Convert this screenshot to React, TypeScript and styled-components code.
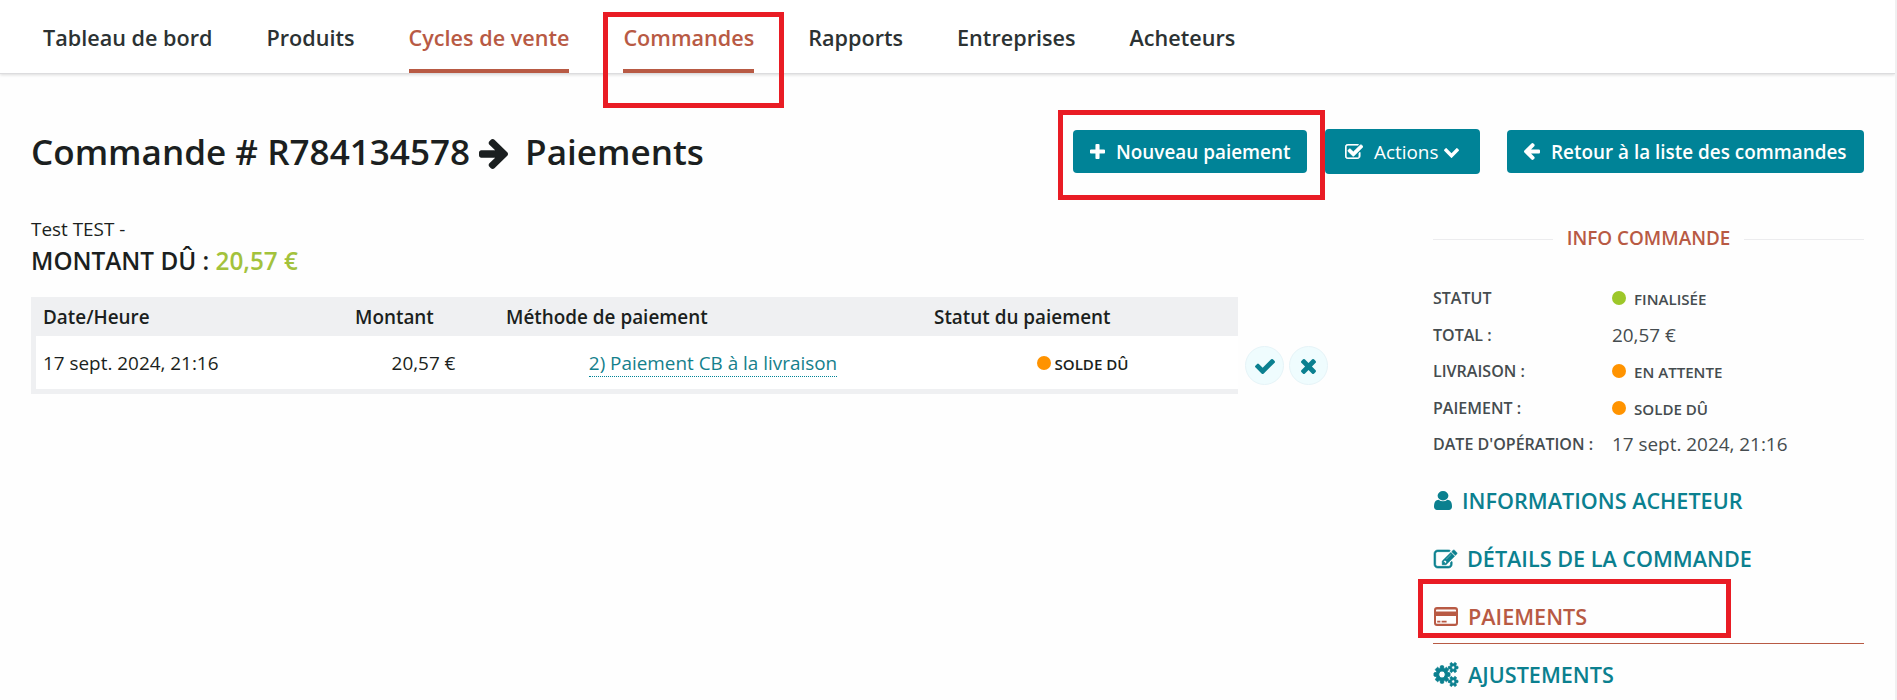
import React from "react";
import styled, { createGlobalStyle } from "styled-components";

const teal = "#008397";
const rust = "#b85a44";
const green = "#9dc729";
const orange = "#ff9300";

const GlobalStyle = createGlobalStyle`
  * { box-sizing: border-box; }
  body {
    margin: 0;
    background: #fefefe;
    color: #1b1f20;
    font-family: "Open Sans", "Noto Sans", sans-serif;
    font-size: 18.9px;
  }
`;

const Page = styled.div`
  position: relative;
  height: 700px;
  overflow: hidden;
  border-right: 2px solid #f0f0f1;
`;

const Nav = styled.nav`
  display: flex;
  gap: 54px;
  height: 74px;
  padding-left: 43px;
  background: #fff;
  border-bottom: 1px solid #dcdcde;
  box-shadow: 0 1px 3px rgba(0, 0, 0, 0.14);
`;

const NavItem = styled.a<{ $active?: boolean }>`
  display: flex;
  align-items: center;
  height: 73px;
  padding-top: 6px;
  border-bottom: 4px solid ${(p) => (p.$active ? rust : "transparent")};
  color: ${(p) => (p.$active ? rust : "#2c3233")};
  font-size: 21.62px;
  font-weight: 600;
  white-space: nowrap;
`;

const TitleBar = styled.header`
  display: flex;
  align-items: center;
  justify-content: space-between;
  height: 45px;
  margin: 55px 31px 0 31px;
`;

const Title = styled.h1`
  display: flex;
  align-items: center;
  margin: 0;
  font-size: 35.1px;
  line-height: 43px;
  font-weight: 600;
  white-space: nowrap;
  svg { margin: 5px 17px 0 9px; }
`;

const Toolbar = styled.div`
  display: flex;
  align-items: center;
`;

const Button = styled.button<{ $width: number; $gap?: number }>`
  display: flex;
  align-items: center;
  flex: none;
  width: ${(p) => p.$width}px;
  height: 43px;
  margin-left: ${(p) => p.$gap ?? 0}px;
  padding: 0 0 0 17px;
  border: 0;
  border-radius: 4px;
  background: ${teal};
  color: #fff;
  font: 600 18.9px "Open Sans", sans-serif;
  white-space: nowrap;
  svg:first-child { margin-right: 11px; }
`;

const MenuButton = styled(Button)`
  height: 45px;
  padding-left: 20px;
  font-weight: 400;
  svg:first-child { margin-right: 11px; }
  svg:last-child { margin: 3px 0 0 6px; }
`;

const Columns = styled.div`
  display: flex;
  justify-content: space-between;
  margin: 0 31px;
`;

const Main = styled.main`
  width: 1300px;
  padding-top: 42px;
`;

const Customer = styled.div`
  line-height: 27px;
`;

const AmountDue = styled.h5`
  margin: 0 0 19px;
  font-size: 24.3px;
  line-height: 35px;
  font-weight: 600;
  span { color: #a3c23c; }
`;

const PaymentArea = styled.div`
  display: flex;
  align-items: flex-end;
`;

const Table = styled.div`
  width: 1207px;
  flex: none;
`;

const TableRow = styled.div<{ $head?: boolean }>`
  display: grid;
  grid-template-columns: 312px 151px 428px 316px;
  align-items: center;
  height: ${(p) => (p.$head ? 39 : 58)}px;
  padding-top: 1px;
  background: ${(p) => (p.$head ? "#eff0f2" : "#fff")};
  font-weight: ${(p) => (p.$head ? 600 : 400)};
  box-shadow: ${(p) => (p.$head ? "none" : "inset 5px -5px 0 #eff0f2")};
  padding-bottom: ${(p) => (p.$head ? 0 : 5)}px;
`;

const Cell = styled.div<{ $center?: boolean }>`
  display: flex;
  align-items: center;
  justify-content: ${(p) => (p.$center ? "center" : "flex-start")};
  padding-left: ${(p) => (p.$center ? 10 : 12)}px;
  white-space: nowrap;
`;

const MethodLink = styled.a`
  border-bottom: 1px dotted ${teal};
  color: #14808c;
  line-height: 26px;
  margin-top: 1px;
`;

const RowActions = styled.div`
  display: flex;
  gap: 5px;
  margin: 0 0 9px 7px;
`;

const RoundButton = styled.button`
  display: flex;
  align-items: center;
  justify-content: center;
  width: 39px;
  height: 39px;
  padding: 2px 0 0;
  border: 1px solid #e6f4f8;
  border-radius: 50%;
  background: #effcfe;
  color: #0b8090;
`;

const Dot = styled.i<{ $color: string }>`
  flex: none;
  width: 14px;
  height: 14px;
  margin-right: 8px;
  border-radius: 50%;
  background: ${(p) => p.$color};
`;

const State = styled.span`
  display: flex;
  align-items: center;
  font-size: 15.1px;
  line-height: 20px;
  font-weight: 600;
  span { padding-top: 2px; }
`;

const CellState = styled(State)`
  margin-right: 4px;
  ${Dot} { margin-right: 3px; }
`;

const Sidebar = styled.aside`
  width: 431px;
  padding-top: 50px;
`;

const SideTitle = styled.div`
  display: flex;
  align-items: center;
  justify-content: space-between;
  height: 28px;
  margin-bottom: 28px;
  color: ${rust};
  font-weight: 600;
  &::before, &::after {
    content: "";
    width: 120px;
    height: 1px;
    margin-top: 3px;
    background: #ececee;
  }
`;

const InfoRow = styled.div`
  display: grid;
  grid-template-columns: 179px 1fr;
  align-items: center;
  height: 36.5px;
  color: #454c4f;
  white-space: nowrap;
`;

const InfoLabel = styled.span`
  font-size: 16.05px;
  font-weight: 600;
`;

const Menu = styled.div`
  display: flex;
  flex-direction: column;
  margin-top: 7.5px;
`;

const MenuItem = styled.a<{ $active?: boolean }>`
  display: flex;
  align-items: center;
  height: 58px;
  padding-top: 3px;
  border-bottom: 1px solid ${(p) => (p.$active ? rust : "transparent")};
  color: ${(p) => (p.$active ? rust : "#0b808f")};
  font-size: 21.6px;
  font-weight: 600;
  white-space: nowrap;
  svg { margin: 1px 10px 0 1px; overflow: visible; }
`;

const Highlight = styled.div<{ $x: number; $y: number; $w: number; $h: number }>`
  position: absolute;
  left: ${(p) => p.$x}px;
  top: ${(p) => p.$y}px;
  width: ${(p) => p.$w}px;
  height: ${(p) => p.$h}px;
  border: 5px solid #e91c24;
  pointer-events: none;
`;

const shapes = {
  plus: ["192 128 1408 1408", "M1600 736v192q0 40-28 68t-68 28h-416v416q0 40-28 68t-68 28h-192q-40 0-68-28t-28-68v-416h-416q-40 0-68-28t-28-68v-192q0-40 28-68t68-28h416v-416q0-40 28-68t68-28h192q40 0 68 28t28 68v416h416q40 0 68 28t28 68z"],
  check: ["121 334 1550 1188", "M1671 566q0 40-28 68l-724 724-136 136q-28 28-68 28t-68-28l-136-136-362-362q-28-28-28-68t28-68l136-136q28-28 68-28t68 28l294 295 656-657q28-28 68-28t68 28l136 136q28 28 28 68z"],
  times: ["302 366 1188 1188", "M1490 1322q0 40-28 68l-136 136q-28 28-68 28t-68-28l-294-294-294 294q-28 28-68 28t-68-28l-136-136q-28-28-28-68t28-68l294-294-294-294q-28-28-28-68t28-68l136-136q28-28 68-28t68 28l294 294 294-294q28-28 68-28t68 28l136 136q28 28 28 68t-28 68l-294 294 294 294q28 28 28 68z"],
  arrowLeft: ["192 181 1472 1558", "M1664 896v128q0 53-32.5 90.5t-84.5 37.5h-704l293 294q38 36 38 90t-38 90l-75 76q-37 37-90 37-52 0-91-37l-651-652q-37-37-37-90 0-52 37-91l651-650q38-38 91-38 52 0 90 38l75 74q38 38 38 91t-38 91l-293 293h704q52 0 84.5 37.5t32.5 90.5z"],
  arrowRight: ["128 181 1472 1558", "M1600 960q0 54-37 91l-651 651q-39 37-91 37-51 0-90-37l-75-75q-38-38-38-91t38-91l293-293h-704q-52 0-84.5-37.5t-32.5-90.5v-128q0-53 32.5-90.5t84.5-37.5h704l-293-294q-38-36-38-90t38-90l75-75q38-38 90-38 53 0 91 38l651 651q37 35 37 90z"],
  checkSquare: ["64 128 1663 1408", "M1472 930v318q0 119-84.5 203.5t-203.5 84.5h-832q-119 0-203.5-84.5t-84.5-203.5v-832q0-119 84.5-203.5t203.5-84.5h832q63 0 117 25 15 7 18 23 3 17-9 29l-49 49q-10 10-23 10-3 0-9-2-23-6-45-6h-832q-66 0-113 47t-47 113v832q0 66 47 113t113 47h832q66 0 113-47t47-113v-254q0-13 9-22l64-64q10-10 23-10 6 0 12 3 20 8 20 29zm231-489l-814 814q-24 24-57 24t-57-24l-430-430q-24-24-24-57t24-57l110-110q24-24 57-24t57 24l263 263 647-647q24-24 57-24t57 24l110 110q24 24 24 57t-24 57z"],
  chevron: ["90 533 1612 1035", "M1683 808l-742 741q-19 19-45 19t-45-19l-742-741q-19-19-19-45.5t19-45.5l166-165q19-19 45-19t45 19l531 531 531-531q19-19 45-19t45 19l166 165q19 19 19 45.5t-19 45.5z"],
  user: ["256 128 1280 1536", "M1536 1399q0 109-62.5 187t-150.5 78h-854q-88 0-150.5-78t-62.5-187q0-85 8.5-160.5t31.5-152 58.5-131 94-89 134.5-34.5q131 128 313 128t313-128q76 0 134.5 34.5t94 89 58.5 131 31.5 152 8.5 160.5zm-256-887q0 159-112.5 271.5t-271.5 112.5-271.5-112.5-112.5-271.5 112.5-271.5 271.5-112.5 271.5 112.5 112.5 271.5z"],
  edit: ["0 128 1784 1408", "M888 1184l116-116-152-152-116 116v56h96v96h56zm440-720q-16-16-33 1l-350 350q-17 17-1 33t33-1l350-350q17-17 1-33zm80 594v190q0 119-84.5 203.5t-203.5 84.5h-832q-119 0-203.5-84.5t-84.5-203.5v-832q0-119 84.5-203.5t203.5-84.5h832q63 0 117 25 15 7 18 23 3 17-9 29l-49 49q-14 14-32 8-23-6-45-6h-832q-66 0-113 47t-47 113v832q0 66 47 113t113 47h832q66 0 113-47t47-113v-126q0-13 9-22l64-64q15-15 35-7t20 29zm-96-738l288 288-672 672h-288v-288zm444 132l-92 92-288-288 92-92q28-28 68-28t68 28l152 152q28 28 28 68t-28 68z"],
  card: ["0 0 24 19", "M3 0h18a3 3 0 0 1 3 3v13a3 3 0 0 1-3 3h-18a3 3 0 0 1-3-3v-13a3 3 0 0 1 3-3zM2.8 2.4q-.8 0-.8.8v1.400h20v-1.400q0-.8-.8-.8zM2 9v7q0 .8 .8 .8h18.400q.8 0 .8-.8v-7zM3.200 13.800h3.200v1.700h-3.200zM7.600 13.800h5v1.700h-5z"],
  cogs: ["0 124 1920 1544", "M896 896q0-106-75-181t-181-75-181 75-75 181 75 181 181 75 181-75 75-181zm768 512q0-52-38-90t-90-38-90 38-38 90q0 53 37.5 90.5t90.5 37.5 90.5-37.5 37.5-90.5zm0-1024q0-52-38-90t-90-38-90 38-38 90q0 53 37.5 90.5t90.5 37.5 90.5-37.5 37.5-90.5zm-384 421v185q0 10-7 19.5t-16 10.5l-155 24q-11 35-32 76 34 48 90 115 7 11 7 20 0 12-7 19-23 30-82.5 89.5t-78.5 59.5q-11 0-21-7l-115-90q-37 19-77 31-11 108-23 155-7 24-30 24h-186q-11 0-20-7.5t-10-17.5l-23-153q-34-10-75-31l-118 89q-7 7-20 7-11 0-21-8-144-133-144-160 0-9 7-19 10-14 41-53t47-61q-23-44-35-82l-152-24q-10-1-17-9.5t-7-19.5v-185q0-10 7-19.5t16-10.5l155-24q11-35 32-76-34-48-90-115-7-11-7-20 0-12 7-20 22-30 82-89t79-59q11 0 21 7l115 90q34-18 77-32 11-108 23-154 7-24 30-24h186q11 0 20 7.5t10 17.5l23 153q34 10 75 31l118-89q8-7 20-7 11 0 21 8 144 133 144 160 0 8-7 19-12 16-42 54t-45 60q23 48 34 82l152 23q10 2 17 10.5t7 19.5zm640 533v140q0 16-149 31-12 27-30 52 51 113 51 138 0 4-4 7-122 71-124 71-8 0-46-47t-52-68q-20 2-30 2t-30-2q-14 21-52 68t-46 47q-2 0-124-71-4-3-4-7 0-25 51-138-18-25-30-52-149-15-149-31v-140q0-16 149-31 13-29 30-52-51-113-51-138 0-4 4-7 4-2 35-20t59-34 30-16q8 0 46 46.5t52 67.5q20-2 30-2t30 2q51-71 92-112l6-2q4 0 124 70 4 3 4 7 0 25-51 138 17 23 30 52 149 15 149 31zm0-1024v140q0 16-149 31-12 27-30 52 51 113 51 138 0 4-4 7-122 71-124 71-8 0-46-47t-52-68q-20 2-30 2t-30-2q-14 21-52 68t-46 47q-2 0-124-71-4-3-4-7 0-25 51-138-18-25-30-52-149-15-149-31v-140q0-16 149-31 13-29 30-52-51-113-51-138 0-4 4-7 4-2 35-20t59-34 30-16q8 0 46 46.5t52 67.5q20-2 30-2t30 2q51-71 92-112l6-2q4 0 124 70 4 3 4 7 0 25-51 138 17 23 30 52 149 15 149 31z"],
} as const;

interface IconProps {
  name: keyof typeof shapes;
  w: number;
  h: number;
  weight?: number;
}

function Icon({ name, w, h, weight = 0 }: IconProps) {
  const [box, d] = shapes[name];
  return (
    <svg
      width={w}
      height={h}
      viewBox={box}
      preserveAspectRatio="none"
      fill="currentColor"
      fillRule={name === "card" ? "evenodd" : "nonzero"}
      stroke={weight ? "currentColor" : "none"}
      strokeWidth={weight}
      aria-hidden
    >
      <path d={d} />
    </svg>
  );
}

const navItems = [
  { label: "Tableau de bord" },
  { label: "Produits" },
  { label: "Cycles de vente", active: true },
  { label: "Commandes", active: true },
  { label: "Rapports" },
  { label: "Entreprises" },
  { label: "Acheteurs" },
];

const infos: { label: string; value: string; dot?: string }[] = [
  { label: "STATUT", value: "FINALISÉE", dot: green },
  { label: "TOTAL :", value: "20,57 €" },
  { label: "LIVRAISON :", value: "EN ATTENTE", dot: orange },
  { label: "PAIEMENT :", value: "SOLDE DÛ", dot: orange },
  { label: "DATE D'OPÉRATION :", value: "17 sept. 2024, 21:16" },
];

export default function App() {
  return (
    <>
      <GlobalStyle />
      <Page>
        <Nav>
          {navItems.map((n) => (
            <NavItem key={n.label} $active={n.active}>{n.label}</NavItem>
          ))}
        </Nav>
        <TitleBar>
          <Title>
            Commande # R784134578
            <Icon name="arrowRight" w={29} h={30} />
            Paiements
          </Title>
          <Toolbar>
            <Button $width={234}><Icon name="plus" w={15} h={15} />Nouveau paiement</Button>
            <MenuButton $width={155} $gap={18}>
              <Icon name="checkSquare" w={18} h={15} weight={50} />Actions<Icon name="chevron" w={15} h={10} />
            </MenuButton>
            <Button $width={357} $gap={27}><Icon name="arrowLeft" w={16} h={17} />Retour à la liste des commandes</Button>
          </Toolbar>
        </TitleBar>
        <Columns>
          <Main>
            <Customer>Test TEST -</Customer>
            <AmountDue>MONTANT DÛ : <span>20,57 €</span></AmountDue>
            <PaymentArea>
              <Table>
                <TableRow $head>
                  <Cell>Date/Heure</Cell>
                  <Cell>Montant</Cell>
                  <Cell>Méthode de paiement</Cell>
                  <Cell>Statut du paiement</Cell>
                </TableRow>
                <TableRow>
                  <Cell>17 sept. 2024, 21:16</Cell>
                  <Cell $center>20,57 €</Cell>
                  <Cell $center><MethodLink>2) Paiement CB à la livraison</MethodLink></Cell>
                  <Cell $center><CellState><Dot $color={orange} /><span>SOLDE DÛ</span></CellState></Cell>
                </TableRow>
              </Table>
              <RowActions>
                <RoundButton><Icon name="check" w={20} h={15} /></RoundButton>
                <RoundButton><Icon name="times" w={15} h={15} /></RoundButton>
              </RowActions>
            </PaymentArea>
          </Main>
          <Sidebar>
            <SideTitle>INFO COMMANDE</SideTitle>
            {infos.map((i) => (
              <InfoRow key={i.label}>
                <InfoLabel>{i.label}</InfoLabel>
                {i.dot ? <State><Dot $color={i.dot} /><span>{i.value}</span></State> : <span>{i.value}</span>}
              </InfoRow>
            ))}
            <Menu>
              <MenuItem><Icon name="user" w={18} h={19} />INFORMATIONS ACHETEUR</MenuItem>
              <MenuItem><Icon name="edit" w={23} h={18} weight={50} />DÉTAILS DE LA COMMANDE</MenuItem>
              <MenuItem $active><Icon name="card" w={24} h={19} />PAIEMENTS</MenuItem>
              <MenuItem><Icon name="cogs" w={24} h={21} weight={70} />AJUSTEMENTS</MenuItem>
            </Menu>
          </Sidebar>
        </Columns>
        <Highlight $x={603} $y={12} $w={181} $h={96} />
        <Highlight $x={1058} $y={110} $w={267} $h={90} />
        <Highlight $x={1418} $y={579} $w={313} $h={59} />
      </Page>
    </>
  );
}
